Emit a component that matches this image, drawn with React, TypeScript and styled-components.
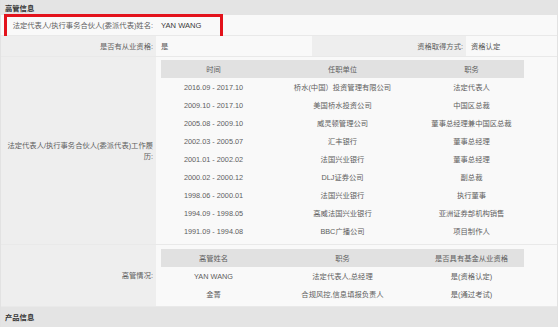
import React from 'react';
import styled, { createGlobalStyle } from 'styled-components';

const GlobalStyle = createGlobalStyle`
  body {
    margin: 0;
    background: #ffffff;
    font-family: "Liberation Sans", "Noto Sans CJK SC", sans-serif;
    font-size: 7.3px;
    color: #5e5e5e;
  }
`;

const Page = styled.div`
  width: 558px;
  box-sizing: border-box;
  border-left: 1px solid #e2e2e2;
  border-right: 1px solid #e2e2e2;
`;

const SectionTitle = styled.div`
  height: 15px;
  display: flex;
  align-items: center;
  padding-left: 4px;
  background: #e4e4e4;
  color: #333333;
  font-weight: bold;
`;

const ProductTitle = styled(SectionTitle)`
  height: 20px;
  margin-bottom: 4px;
`;

const InfoRow = styled.div<{ $h: number }>`
  position: relative;
  display: flex;
  height: ${(p) => p.$h}px;
  box-sizing: border-box;
  background: #f9f9f9;
  border-bottom: 1px solid #e9e9e9;
`;

const Label = styled.div<{ $w: number; $plain?: boolean }>`
  flex: none;
  width: ${(p) => p.$w}px;
  box-sizing: border-box;
  padding: 0 3px 0 4px;
  display: flex;
  align-items: center;
  justify-content: flex-end;
  text-align: right;
  line-height: 11px;
  background: ${(p) => (p.$plain ? 'transparent' : '#eeeeee')};
`;

const Value = styled.div<{ $w?: number; $strong?: boolean }>`
  flex: ${(p) => (p.$w ? 'none' : '1')};
  width: ${(p) => (p.$w ? `${p.$w}px` : 'auto')};
  box-sizing: border-box;
  padding-left: 5px;
  display: flex;
  align-items: center;
  color: ${(p) => (p.$strong ? '#3a3a3a' : '#555555')};
  font-size: ${(p) => (p.$strong ? '7.6px' : 'inherit')};
`;

const Nested = styled.div<{ $top: number }>`
  flex: 1;
  padding: ${(p) => p.$top}px 0 0 5px;
`;

const Highlight = styled.div`
  position: absolute;
  left: 3px;
  top: -1px;
  width: 219px;
  height: 25px;
  box-sizing: border-box;
  border: 3px solid #e3121b;
  pointer-events: none;
`;

const SubTable = styled.table`
  width: 363px;
  border-collapse: collapse;
  table-layout: fixed;

  th {
    height: 18px;
    padding: 0;
    background: #e1e1e1;
    font-weight: normal;
    color: #5e5e5e;
  }

  td {
    height: 18px;
    padding: 0;
    text-align: center;
    color: #5e5e5e;
  }
`;

const career = [
  ['2016.09 - 2017.10', '桥水(中国）投资管理有限公司', '法定代表人'],
  ['2009.10 - 2017.10', '美国桥水投资公司', '中国区总裁'],
  ['2005.08 - 2009.10', '威灵顿管理公司', '董事总经理兼中国区总裁'],
  ['2002.03 - 2005.07', '汇丰银行', '董事总经理'],
  ['2001.01 - 2002.02', '法国兴业银行', '董事总经理'],
  ['2000.02 - 2000.12', 'DLJ证券公司', '副总裁'],
  ['1998.06 - 2000.01', '法国兴业银行', '执行董事'],
  ['1994.09 - 1998.05', '高威法国兴业银行', '亚洲证券部机构销售'],
  ['1991.09 - 1994.08', 'BBC广播公司', '项目制作人'],
];

const managers = [
  ['YAN WANG', '法定代表人,总经理', '是(资格认定)'],
  ['金菁', '合规风控,信息填报负责人', '是(通过考试)'],
];

function Cols() {
  return (
    <colgroup>
      <col style={{ width: 105 }} />
      <col style={{ width: 153 }} />
      <col style={{ width: 105 }} />
    </colgroup>
  );
}

export default function App() {
  return (
    <>
      <GlobalStyle />
      <Page>
        <SectionTitle>高管信息</SectionTitle>

        <InfoRow $h={21}>
          <Label $w={155} $plain>法定代表人/执行事务合伙人(委派代表)姓名:</Label>
          <Value $strong>YAN WANG</Value>
          <Highlight />
        </InfoRow>

        <InfoRow $h={21}>
          <Label $w={155}>是否有从业资格:</Label>
          <Value $w={156}>是</Value>
          <Label $w={154}>资格取得方式:</Label>
          <Value>资格认定</Value>
        </InfoRow>

        <InfoRow $h={188}>
          <Label $w={155}>法定代表人/执行事务合伙人(委派代表)工作履历:</Label>
          <Nested $top={3}>
            <SubTable>
              <Cols />
              <thead>
                <tr>
                  <th>时间</th>
                  <th>任职单位</th>
                  <th>职务</th>
                </tr>
              </thead>
              <tbody>
                {career.map((r) => (
                  <tr key={r[0]}>
                    <td>{r[0]}</td>
                    <td>{r[1]}</td>
                    <td>{r[2]}</td>
                  </tr>
                ))}
              </tbody>
            </SubTable>
          </Nested>
        </InfoRow>

        <InfoRow $h={62}>
          <Label $w={155}>高管情况:</Label>
          <Nested $top={4}>
            <SubTable>
              <Cols />
              <thead>
                <tr>
                  <th>高管姓名</th>
                  <th>职务</th>
                  <th>是否具有基金从业资格</th>
                </tr>
              </thead>
              <tbody>
                {managers.map((r) => (
                  <tr key={r[0]}>
                    <td>{r[0]}</td>
                    <td>{r[1]}</td>
                    <td>{r[2]}</td>
                  </tr>
                ))}
              </tbody>
            </SubTable>
          </Nested>
        </InfoRow>

        <ProductTitle>产品信息</ProductTitle>
      </Page>
    </>
  );
}
